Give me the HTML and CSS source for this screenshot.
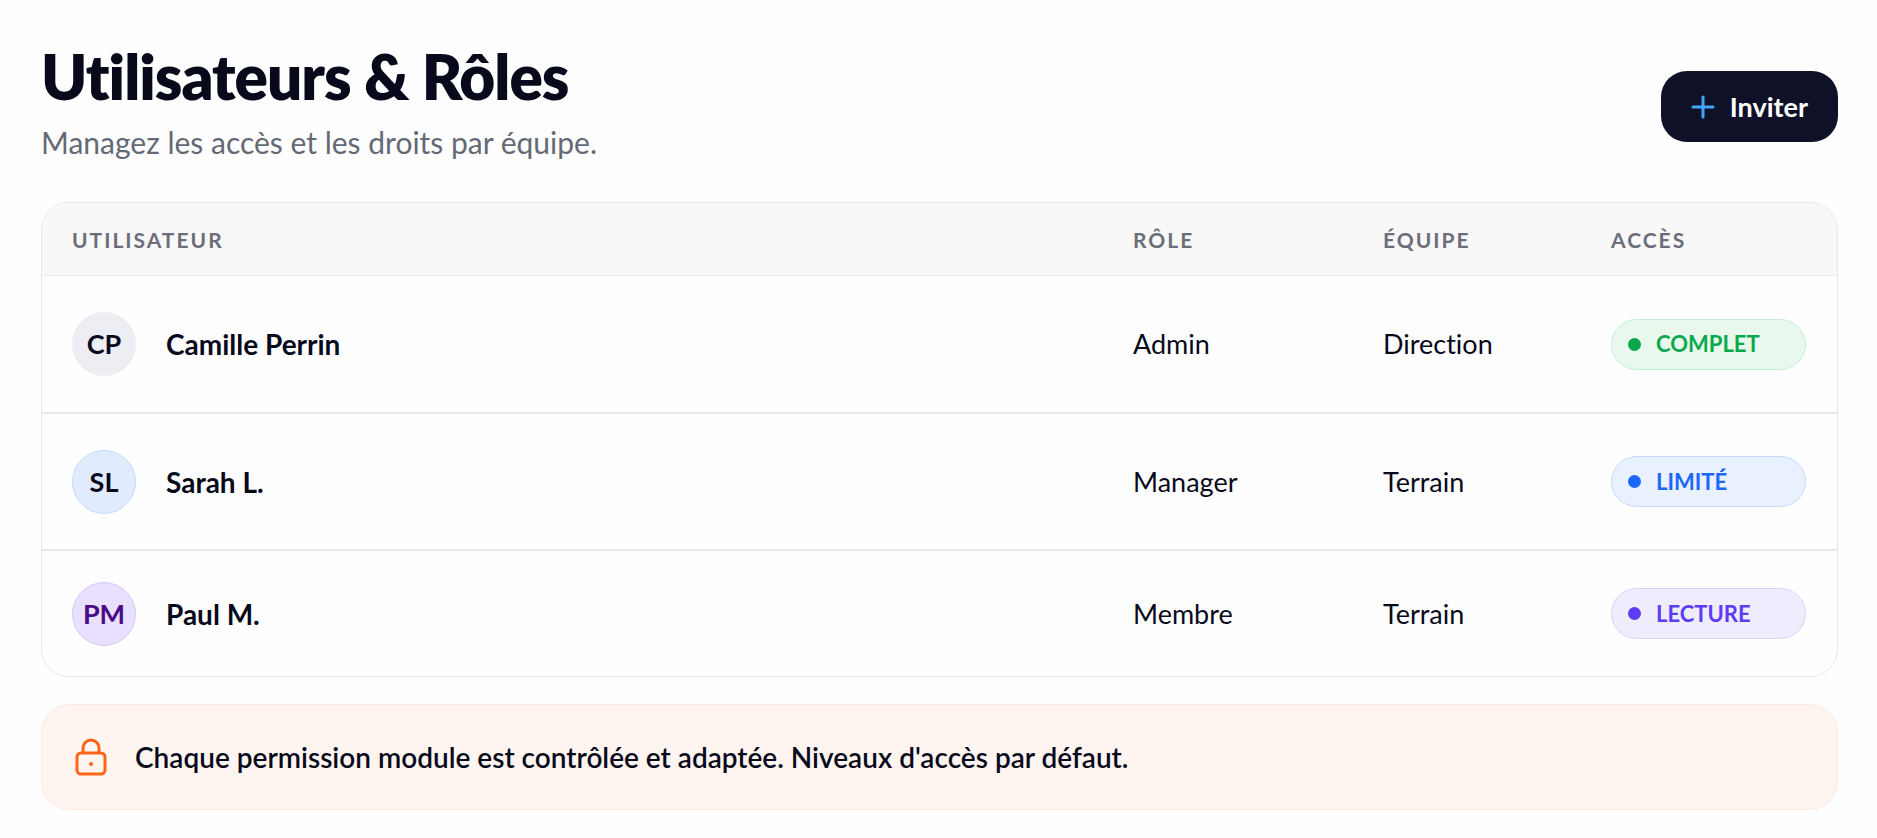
FILE: index.html
```html
<!DOCTYPE html>
<html lang="fr">
<head>
    <meta charset="UTF-8">
    <meta name="viewport" content="width=device-width, initial-scale=1.0">
    <title>Utilisateurs &amp; Rôles</title>
    <link rel="stylesheet" href="styles.css">
</head>
<body>
    <main class="page">
        <header class="page-header">
            <div>
                <h1>Utilisateurs &amp; Rôles</h1>
                <p class="subtitle">Managez les accès et les droits par équipe.</p>
            </div>
            <button type="button" class="btn-invite">
                <svg class="icon-plus" viewBox="0 0 24 24" aria-hidden="true">
                    <path d="M12 2v20M2 12h20"/>
                </svg>
                Inviter
            </button>
        </header>

        <div class="card">
            <table class="users">
                <thead>
                    <tr>
                        <th scope="col">Utilisateur</th>
                        <th scope="col" class="col-role">Rôle</th>
                        <th scope="col" class="col-team">Équipe</th>
                        <th scope="col" class="col-access">Accès</th>
                    </tr>
                </thead>
                <tbody>
                    <tr>
                        <td>
                            <div class="user">
                                <span class="avatar avatar-gray">CP</span>
                                <span class="name">Camille Perrin</span>
                            </div>
                        </td>
                        <td>Admin</td>
                        <td>Direction</td>
                        <td><span class="badge badge-green">Complet</span></td>
                    </tr>
                    <tr>
                        <td>
                            <div class="user">
                                <span class="avatar avatar-blue">SL</span>
                                <span class="name">Sarah L.</span>
                            </div>
                        </td>
                        <td>Manager</td>
                        <td>Terrain</td>
                        <td><span class="badge badge-blue">Limité</span></td>
                    </tr>
                    <tr>
                        <td>
                            <div class="user">
                                <span class="avatar avatar-purple">PM</span>
                                <span class="name">Paul M.</span>
                            </div>
                        </td>
                        <td>Membre</td>
                        <td>Terrain</td>
                        <td><span class="badge badge-purple">Lecture</span></td>
                    </tr>
                </tbody>
            </table>
        </div>

        <div class="notice">
            <svg class="icon-lock" viewBox="0 0 32 40" aria-hidden="true">
                <path d="M8 16V11a8 8 0 0 1 16 0v5"/>
                <rect x="2" y="16" width="28" height="21" rx="4"/>
                <circle cx="16" cy="27" r="2"/>
            </svg>
            <p>Chaque permission module est contrôlée et adaptée. Niveaux d'accès par défaut.</p>
        </div>
    </main>
</body>
</html>
```
FILE: styles.css
```css
* {
    box-sizing: border-box;
}
body {
    margin: 0;
    background-color: #fefefe;
    color: #080a1c;
    font-family: Lato, 'Open Sans', sans-serif;
    font-size: 27px;
    line-height: 36px;
    font-variant-ligatures: none;
}
.page {
    padding: 52px 39px 28px 41px;
}
.page-header {
    display: flex;
    justify-content: space-between;
    align-items: center;
    margin-bottom: 41px;
}
h1 {
    margin: 0;
    font-size: 62px;
    line-height: 48px;
    font-weight: 800;
    letter-spacing: -1px;
}
.subtitle {
    margin: 23px 0 0;
    font-size: 30px;
    line-height: 38px;
    color: #646976;
}
.btn-invite {
    display: flex;
    align-items: center;
    gap: 15px;
    height: 71px;
    padding: 0 30px;
    border: none;
    border-radius: 26px;
    background-color: #0f1128;
    color: #fff;
    font-family: inherit;
    font-size: 27px;
    font-weight: 700;
    cursor: pointer;
}
.icon-plus {
    width: 24px;
    height: 24px;
    fill: none;
    stroke: #42a5fb;
    stroke-width: 3;
    stroke-linecap: round;
}
.card {
    border: 1px solid #e8e8ea;
    border-radius: 28px;
    background-color: #fefefe;
    overflow: hidden;
}
.users {
    width: 100%;
    border-collapse: separate;
    border-spacing: 0;
    table-layout: fixed;
}
.users th {
    height: 73px;
    padding: 2px 0 0 32px;
    background-color: #f8f8f8;
    border-bottom: 1px solid #ebebec;
    color: #6b6e79;
    font-size: 21px;
    font-weight: 700;
    letter-spacing: 2px;
    text-align: left;
    text-transform: uppercase;
}
.users td {
    height: 137px;
    padding: 0 0 0 32px;
    border-bottom: 2px solid #e8e8ea;
}
.users th:first-child,
.users td:first-child {
    padding-left: 30px;
}
.users tr:first-child td {
    height: 138px;
}
.users tr:last-child td {
    height: 125px;
    border-bottom: none;
}
.users td:last-child {
    padding-right: 31px;
}
.col-role {
    width: 250px;
}
.col-team {
    width: 228px;
}
.col-access {
    width: 258px;
}
.user {
    display: flex;
    align-items: center;
    gap: 30px;
}
.avatar {
    display: flex;
    align-items: center;
    justify-content: center;
    width: 64px;
    height: 64px;
    border: 1px solid;
    border-radius: 50%;
    font-weight: 700;
}
.avatar-gray {
    background-color: #ededf4;
    border-color: #ededf4;
}
.avatar-blue {
    background-color: #e0ecfe;
    border-color: #c3dafd;
}
.avatar-purple {
    background-color: #e8e0fe;
    border-color: #d5c8fb;
    color: #480b85;
}
.name {
    font-size: 28px;
    font-weight: 700;
}
.badge {
    display: flex;
    align-items: center;
    gap: 15px;
    height: 51px;
    padding-left: 16px;
    border: 1px solid;
    border-radius: 26px;
    font-size: 22px;
    font-weight: 700;
    text-transform: uppercase;
}
.badge::before {
    content: "";
    width: 13px;
    height: 13px;
    border-radius: 50%;
    background-color: currentColor;
}
.badge-green {
    background-color: #e8f8ed;
    border-color: #c5efd3;
    color: #0aa84c;
}
.badge-blue {
    background-color: #e9f0fe;
    border-color: #c6dafd;
    color: #1b66fb;
}
.badge-purple {
    background-color: #efecfe;
    border-color: #d9d2fc;
    color: #5e3bf5;
}
.notice {
    display: flex;
    align-items: center;
    gap: 28px;
    height: 106px;
    margin-top: 27px;
    padding: 0 33px;
    border: 1px solid #fee9dd;
    border-radius: 28px;
    background-color: #fff5f0;
    font-size: 28px;
    font-weight: 600;
}
.notice p {
    margin: 0;
}
.icon-lock {
    width: 32px;
    height: 40px;
    fill: none;
    stroke: #fd6418;
    stroke-width: 3;
}
.icon-lock circle {
    fill: #fd6418;
    stroke: none;
}
```
